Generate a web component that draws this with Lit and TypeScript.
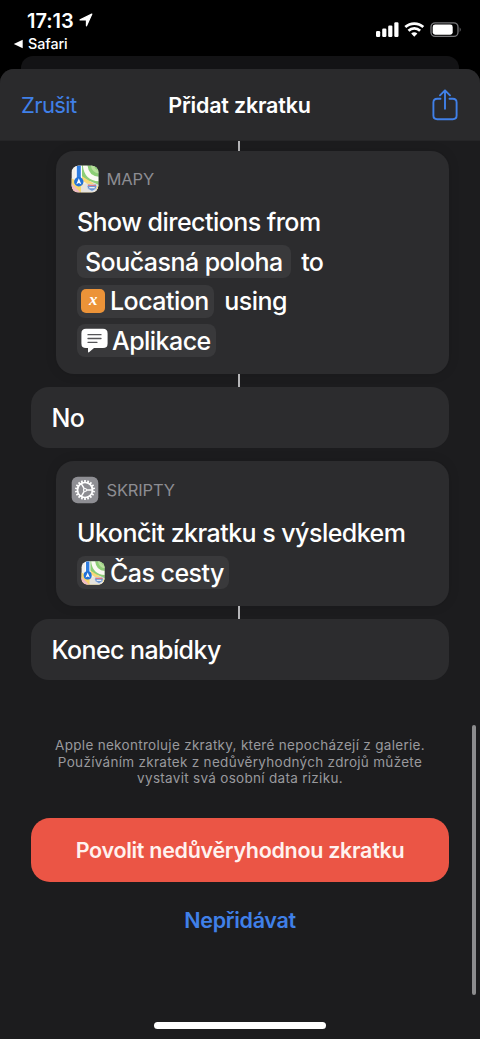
import { LitElement, html, css, svg } from "lit";
import { customElement } from "lit/decorators.js";

const mapIcon = html`<svg viewBox="0 0 28 28" width="100%" height="100%">
  <defs><clipPath id="r"><rect x=".7" y=".7" width="26.6" height="26.6" rx="6.5" /></clipPath></defs>
  <g clip-path="url(#r)">
    <rect width="28" height="28" fill="#f1efe9" />
    <path d="M0 13 28 28H0z" fill="#f6d56d" />
    <path d="M0 18 10 28H0z" fill="#efb9c4" />
    <path d="M10 0h18v23L10 12z" fill="#8dce76" />
    <path d="M10 21v7h18v-8l-9-4z" fill="#e6e3de" />
    <path d="M9 12 28 24" stroke="#f8d978" stroke-width="3.4" />
    <path d="M14-1Q15 14 29 14" fill="none" stroke="#fbfaf4" stroke-width="4.6" />
    <path d="M21-1Q22 7 29 7" fill="none" stroke="#b8df9c" stroke-width="3" />
    <path d="M7.8 0v14" stroke="#fff" stroke-width="6.4" />
    <path d="M7.8 0v14" stroke="#2f7de0" stroke-width="4" />
    <circle cx="7.8" cy="16.8" r="4.7" fill="#2272d8" />
    <path d="m7.8 13.3 2.5 6-2.5-1.2-2.5 1.2z" fill="#fff" />
    <path d="M17 19q4 1.300 8 0 2 3-.4 5.300-1.800 1-3.600 2-1.800-1-3.600-2Q15 22 17 19z" fill="#6f97d2" stroke="#dde6f3" stroke-width=".7" />
    <path d="M17 20.300h8" stroke="#d97986" stroke-width="1.300" />
    <path d="M18.300 22.600h5.400" stroke="#e5edf8" stroke-width="1.300" />
  </g>
</svg>`;

const teeth = Array.from({ length: 18 }, (_, i) => svg`<path d="M14 4v3" transform="rotate(${i * 20} 14 14)" />`);
const gearIcon = html`<svg viewBox="0 0 28 28" width="28" height="28">
  <rect x=".7" y=".7" width="26.600" height="26.600" rx="6" fill="#8e8e93" />
  <g fill="none" stroke="#fff" stroke-width="1.700">
    <circle cx="14" cy="14" r="7.500" />
    ${teeth}
    <circle cx="14" cy="14" r="1.500" stroke-width="1.200" />
    <path d="M15.500 14h6M13.200 12.700l-3-5.200M13.200 15.300l-3 5.200" stroke-width="1.500" />
  </g>
</svg>`;

@customElement("app-root")
export class AppRoot extends LitElement {
  static styles = css`
    :host { display: block; width: 480px; height: 1039px; overflow: hidden; background: #000; color: #fff;
      font-family: Inter, "Noto Sans", sans-serif; }
    * { box-sizing: border-box; }
    svg { display: block; flex: none; }
    .screen { height: 1039px; display: flex; flex-direction: column; }
    .status { height: 56px; display: flex; justify-content: space-between; padding: 9px 18px 0 13px; }
    .clock { display: flex; align-items: center; gap: 5px; padding-left: 14px; height: 23px;
      font-size: 20px; font-weight: 600; letter-spacing: -.05px; }
    .clock svg { margin-top: -1px; }
    .back { display: flex; align-items: center; gap: 5px; height: 23px; font-size: 14.300px; font-weight: 500; letter-spacing: -.05px; }
    .signals { display: flex; align-items: flex-start; padding-top: 12px; }
    .behind { height: 13px; margin: 0 21px; border-radius: 12px 12px 0 0; background: #131315; flex: none; }
    .sheet { flex: 1; position: relative; background: #1c1c1e; border-radius: 14px 14px 0 0; overflow: hidden; display: flex; flex-direction: column; }
    .bar { height: 72px; flex: none; display: grid; grid-template-columns: 1fr auto 1fr; align-items: center;
      padding: 0 22px 0 21px; background: #2a2a2c; border-bottom: 1px solid #252527; font-size: 22px; }
    .cancel { color: #4080e8; letter-spacing: -.6px; }
    .title { font-weight: 600; font-size: 21.500px; letter-spacing: -.2px; }
    .share { justify-self: end; }
    .line { width: 2px; height: 13px; background: #b5b5b7; margin-left: 238px; flex: none; }
    .line.top { height: 10px; }
    .card { margin: 0 31px 0 56px; border-radius: 18px; background: #2c2c2e; padding: 13px 0 0 21px; flex: none;
      box-shadow: 0 0 12px rgba(0,0,0,.12); }
    .maps { height: 223px; }
    .scripts { height: 145px; margin-top: 13px; padding-top: 14px; }
    .app { display: flex; align-items: center; gap: 8px; height: 29px; margin-left: -6.500px; margin-bottom: 9px;
      color: #8d8d92; font-size: 16.500px; letter-spacing: -.15px; }
    .i28 { width: 28px; height: 28px; }
    .row { height: 39.700px; display: flex; align-items: center; font-size: 25px; font-weight: 450; letter-spacing: -.54px; white-space: nowrap; }
    .token { height: 33px; border-radius: 8px; background: #39393b; display: flex; align-items: center; padding: 0 8px; margin-right: 10.500px; }
    .token.icon { padding: 0 5px 0 4px; gap: 5px; }
    .token.chat { gap: 4px; }
    .i24 { width: 24px; height: 24px; }
    .var { width: 24px; height: 24px; border-radius: 5px; background: #ec9338; display: grid; place-items: center;
      font: italic bold 17px/20px "Liberation Serif", serif; padding-bottom: 3px; }
    .menu { height: 61px; margin: 0 31px; border-radius: 18px; background: #2c2c2e; padding-left: 20.500px; display: flex;
      align-items: center; font-size: 25px; font-weight: 450; letter-spacing: -.6px; flex: none; }
    .note { margin-top: 57px; text-align: center; font-size: 13.500px; line-height: 16.500px; color: #99999d; letter-spacing: .3px; white-space: nowrap; }
    .allow { margin: 31px 31px 0; height: 64px; border-radius: 19px; background: #eb5545; flex: none; display: grid; place-items: center;
      font-size: 21.500px; font-weight: 600; letter-spacing: -.3px; color: #fff2ef; }
    .skip { margin-top: 22px; height: 32px; display: grid; place-items: center; color: #4080e8; font-size: 21.500px; font-weight: 600; letter-spacing: -.3px; }
    .scroll { position: absolute; right: 4px; top: 656px; width: 4px; height: 270px; border-radius: 2px; background: #8c8c8e; }
    .home { width: 172px; height: 7px; border-radius: 4px; background: #fff; margin: auto auto 10px; }
  `;

  render() {
    return html`<div class="screen">
      <div class="status">
        <div>
          <div class="clock"><span>17:13</span>
            <svg width="14" height="14" viewBox="0 0 14 14"><path d="M12.800 1.100 7.500 12.800V6.900H1.100z" fill="#fff" stroke="#fff" stroke-width="1.300" stroke-linejoin="round" /></svg></div>
          <div class="back"><svg width="10" height="10" viewBox="0 0 10 10"><path d="M.8 5 9.700.7v8.600z" fill="#fff" /></svg><span>Safari</span></div>
        </div>
        <div class="signals">
          <svg width="86" height="18" viewBox="0 0 86 18" fill="#fff">
            <rect x="0" y="10" width="4.200" height="6" rx="1.200" /><rect x="6.200" y="7.500" width="4.200" height="8.500" rx="1.200" />
            <rect x="12.200" y="4.500" width="4.200" height="11.500" rx="1.200" /><rect x="18.300" y="1.200" width="4.200" height="14.800" rx="1.200" />
            <g fill="none" stroke="#fff" stroke-width="2.700"><path d="M29.300 6.100a13.200 13.200 0 0 1 18 0" /><path d="M32.500 9.700a8.400 8.400 0 0 1 11.600 0" /></g>
            <path d="m38.300 15.700-3.100-3.200q3-2.700 6.200 0z" />
            <rect x="55" y="1.800" width="27" height="13.600" rx="4.200" fill="none" stroke="#77777a" stroke-width="1.300" />
            <rect x="56.700" y="3.500" width="20" height="10.200" rx="2.400" /><path d="M83.700 6.300q2 2.300 0 4.600z" fill="#77777a" />
          </svg>
        </div>
      </div>
      <div class="behind"></div>
      <div class="sheet">
        <div class="bar">
          <span class="cancel">Zrušit</span><span class="title">Přidat zkratku</span>
          <svg class="share" width="26" height="32" viewBox="0 0 26 32" fill="none" stroke="#4080e8" stroke-width="1.900" stroke-linecap="round" stroke-linejoin="round">
            <path d="M8.500 9.700H5.200Q1.400 9.700 1.400 13.500V26.500Q1.400 30.200 5.200 30.200H20.800Q24.600 30.200 24.600 26.500V13.500Q24.600 9.700 20.800 9.700H17.500M13 19.800V1.500M8 6.300l5-5 5 5" /></svg>
        </div>
        <div class="line top"></div>
        <div class="card maps">
          <div class="app"><span class="i28">${mapIcon}</span><span>MAPY</span></div>
          <div class="row">Show directions from</div>
          <div class="row"><span class="token">Současná poloha</span><span>to</span></div>
          <div class="row"><span class="token icon"><span class="var">x</span><span>Location</span></span><span>using</span></div>
          <div class="row"><span class="token icon chat">
            <svg width="27" height="25" viewBox="0 0 27 25"><path d="M5 .8h17q4.600 0 4.600 4.600v10q0 4.600-4.600 4.600h-9l-5 4.300q-1 .5-1-.7V20H5Q.4 20 .4 15.400v-10Q.4.8 5 .8z" fill="#fff" /><path d="M7 6.700h13M7 10.500h13M7 14.300h9" stroke="#555558" stroke-width="1.300" stroke-linecap="round" /></svg>
            <span>Aplikace</span></span></div>
        </div>
        <div class="line"></div>
        <div class="menu">No</div>
        <div class="card scripts">
          <div class="app">${gearIcon}<span>SKRIPTY</span></div>
          <div class="row">Ukončit zkratku s výsledkem</div>
          <div class="row"><span class="token icon"><span class="i24">${mapIcon}</span><span>Čas cesty</span></span></div>
        </div>
        <div class="line"></div>
        <div class="menu">Konec nabídky</div>
        <div class="note">Apple nekontroluje zkratky, které nepocházejí z galerie.<br />Používáním zkratek z nedůvěryhodných zdrojů můžete<br />vystavit svá osobní data riziku.</div>
        <div class="allow">Povolit nedůvěryhodnou zkratku</div>
        <div class="skip">Nepřidávat</div>
        <div class="home"></div>
        <div class="scroll"></div>
      </div>
    </div>`;
  }
}
